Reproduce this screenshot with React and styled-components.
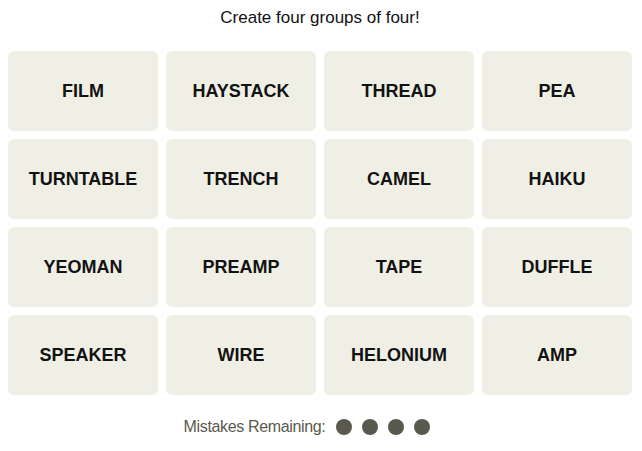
import React from 'react';
import styled, { createGlobalStyle } from 'styled-components';

const words = [
  'FILM', 'HAYSTACK', 'THREAD', 'PEA',
  'TURNTABLE', 'TRENCH', 'CAMEL', 'HAIKU',
  'YEOMAN', 'PREAMP', 'TAPE', 'DUFFLE',
  'SPEAKER', 'WIRE', 'HELONIUM', 'AMP',
];

const App = () => {
  return (
    <>
      <GlobalStyle />
      <Board>
        <Prompt>Create four groups of four!</Prompt>
        <Grid>
          {words.map((word) => (
            <Tile key={word}>{word}</Tile>
          ))}
        </Grid>
        <Mistakes>
          <MistakesLabel>Mistakes Remaining:</MistakesLabel>
          <Dots>
            {[0, 1, 2, 3].map((i) => (
              <Dot key={i} />
            ))}
          </Dots>
        </Mistakes>
      </Board>
    </>
  );
};

const GlobalStyle = createGlobalStyle`
  body {
    margin: 0;
    background: #ffffff;
    font-family: "Liberation Sans", Arial, sans-serif;
  }
`;

const Board = styled.div`
  width: 642px;
  padding: 0 10px 0 8px;
  box-sizing: border-box;
`;

const Prompt = styled.p`
  margin: 0;
  padding-top: 8px;
  height: 51px;
  box-sizing: border-box;
  text-align: center;
  font-size: 17px;
  line-height: 20px;
  color: #121212;
`;

const Grid = styled.div`
  display: grid;
  grid-template-columns: repeat(4, 150px);
  grid-auto-rows: 80px;
  gap: 8px;
`;

const Tile = styled.button`
  display: flex;
  align-items: center;
  justify-content: center;
  border: none;
  border-radius: 6px;
  background: #efefe6;
  color: #121212;
  font-family: "Liberation Sans", Arial, sans-serif;
  font-weight: 700;
  font-size: 18px;
  padding: 0;
  cursor: pointer;
`;

const Mistakes = styled.div`
  display: flex;
  align-items: center;
  justify-content: center;
  gap: 11px;
  margin-top: 24px;
  padding-right: 26px;
  height: 16px;
`;

const MistakesLabel = styled.span`
  font-size: 16px;
  color: #5a594e;
  letter-spacing: -0.35px;
`;

const Dots = styled.div`
  display: flex;
  gap: 10px;
`;

const Dot = styled.span`
  width: 16px;
  height: 16px;
  border-radius: 50%;
  background: #5a594e;
`;

export default App;
